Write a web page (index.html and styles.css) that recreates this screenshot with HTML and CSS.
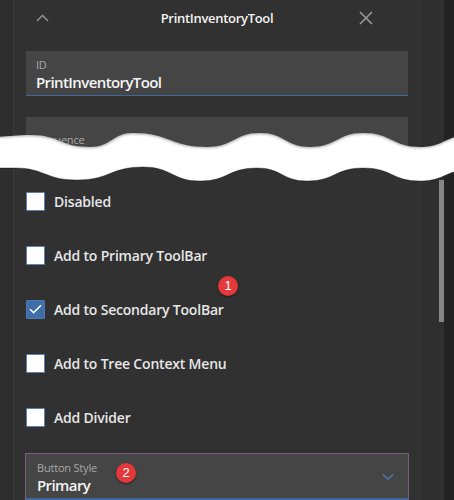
FILE: index.html
```html
<!DOCTYPE html>
<html lang="en">
<head>
<meta charset="utf-8">
<title>PrintInventoryTool</title>
<link rel="stylesheet" href="styles.css">
</head>
<body>
<div class="app">
  <div class="rail-left"></div>
  <div class="panel">
    <div class="header">
      <div class="hdr-left">
        <svg class="chev-up" width="13" height="8" viewBox="0 0 13 8"><path d="M1 7 L6.5 1.5 L12 7" fill="none" stroke="#8c8c8c" stroke-width="1.6"/></svg>
      </div>
      <div class="title">PrintInventoryTool</div>
      <div class="hdr-right">
        <svg width="14" height="14" viewBox="0 0 14 14"><path d="M1 1 L13 13 M13 1 L1 13" stroke="#9c9c9c" stroke-width="1.5"/></svg>
      </div>
    </div>

    <div class="field">
      <div class="label">ID</div>
      <div class="value">PrintInventoryTool</div>
    </div>

    <div class="field field-seq">
      <div class="label">Sequence</div>
      <div class="value">10</div>
    </div>

    <div class="checks">
      <div class="check"><span class="box"></span><span class="check-text">Disabled</span></div>
      <div class="check"><span class="box"></span><span class="check-text">Add to Primary ToolBar</span></div>
      <div class="check"><span class="box box-on"><svg width="13" height="10" viewBox="0 0 13 10"><path d="M1 5.2 L4.6 8.6 L12 1.2" fill="none" stroke="#ffffff" stroke-width="1.5"/></svg></span><span class="check-text">Add to Secondary ToolBar</span></div>
      <div class="check"><span class="box"></span><span class="check-text">Add to Tree Context Menu</span></div>
      <div class="check"><span class="box"></span><span class="check-text">Add Divider</span></div>
      <span class="badge badge-1">1</span>
    </div>

    <div class="select">
      <div class="select-body">
        <div class="label">Button Style</div>
        <div class="value">Primary</div>
      </div>
      <svg class="chev-down" width="12" height="8" viewBox="0 0 12 8"><path d="M1 1.5 L6 6 L11 1.5" fill="none" stroke="#4a7bb5" stroke-width="1.6"/></svg>
      <span class="badge badge-2">2</span>
    </div>
  </div>
  <div class="rail-right"><div class="thumb"></div></div>
  <div class="edge"></div>
</div>

<svg class="tear" width="454" height="70" viewBox="0 120 454 70">
  <defs>
    <filter id="soft" x="-5%" y="-50%" width="110%" height="200%">
      <feGaussianBlur stdDeviation="1.4"/>
    </filter>
    <clipPath id="band">
      <path d="M-10 137 C5 137 15 135 30 135 C60 135 60 147 90 147 C112 147 112 133 133 133 C170 133 170 147 207 147 C234 147 234 133 260 133 C285 133 285 147 310 147 C337 147 337 133 363 133 C392 133 392 147 420 147 C445 147 445 135 470 135 L470 170 C445 170 445 181 420 181 C392 181 392 168 363 168 C335 168 335 181 307 181 C282 181 282 168 257 168 C228 168 228 181 200 181 C172 181 172 167 143 167 C110 167 110 180 77 180 C45 180 45 168 15 168 L-10 168 Z"/>
    </clipPath>
  </defs>
  <path fill="#ffffff" d="M-10 137 C5 137 15 135 30 135 C60 135 60 147 90 147 C112 147 112 133 133 133 C170 133 170 147 207 147 C234 147 234 133 260 133 C285 133 285 147 310 147 C337 147 337 133 363 133 C392 133 392 147 420 147 C445 147 445 135 470 135 L470 170 C445 170 445 181 420 181 C392 181 392 168 363 168 C335 168 335 181 307 181 C282 181 282 168 257 168 C228 168 228 181 200 181 C172 181 172 167 143 167 C110 167 110 180 77 180 C45 180 45 168 15 168 L-10 168 Z"/>
  <g clip-path="url(#band)">
    <path filter="url(#soft)" fill="none" stroke="rgba(0,0,0,0.45)" stroke-width="3" d="M-10 136 C5 136 15 134 30 134 C60 134 60 146 90 146 C112 146 112 132 133 132 C170 132 170 146 207 146 C234 146 234 132 260 132 C285 132 285 146 310 146 C337 146 337 132 363 132 C392 132 392 146 420 146 C445 146 445 134 470 134"/>
  </g>
  <path fill="none" stroke="rgba(0,0,0,0.35)" stroke-width="1" d="M470 170 C445 170 445 181 420 181 C392 181 392 168 363 168 C335 168 335 181 307 181 C282 181 282 168 257 168 C228 168 228 181 200 181 C172 181 172 167 143 167 C110 167 110 180 77 180 C45 180 45 168 15 168 L-10 168"/>
</svg>
</body>
</html>
```

FILE: styles.css
```css
* { box-sizing: border-box; }

html, body {
  margin: 0;
  padding: 0;
  background: #2f2f2f;
  font-family: "Open Sans", "Noto Sans", sans-serif;
  color: #f0f0f0;
}

body {
  position: relative;
  width: 454px;
  height: 500px;
  overflow: hidden;
}

.app {
  display: flex;
  height: 500px;
}

.rail-left {
  width: 13px;
  background: #2e2e2e;
}

.panel {
  position: relative;
  width: 408px;
  padding: 0 12px;
  background: #313131;
  border-left: 1px solid #393939;
  border-right: 1px solid #393939;
  display: flex;
  flex-direction: column;
}

.rail-right {
  width: 23px;
  background: #2f2f2f;
  display: flex;
  justify-content: flex-end;
  padding-top: 180px;
}

.thumb {
  width: 5px;
  height: 142px;
  background: #878787;
}

.edge {
  width: 10px;
  background: #232323;
}

/* header */
.header {
  display: grid;
  grid-template-columns: 1fr auto 1fr;
  align-items: center;
  height: 36px;
}

.hdr-left {
  display: flex;
  padding-left: 10px;
}

.hdr-right {
  display: flex;
  justify-content: flex-end;
  padding-right: 35px;
}

.title {
  font-size: 13px;
  font-weight: 600;
  color: #f2f2f2;
  letter-spacing: -0.3px;
}

/* fields */
.field {
  margin-top: 15px;
  height: 46px;
  background: #454545;
  border-bottom: 1px solid #3c6aa0;
  padding: 6px 10px 0;
}

.field-seq {
  margin-top: 21px;
  padding-top: 15px;
}

.label {
  font-size: 11px;
  line-height: 15px;
  color: #a9a9a9;
  letter-spacing: -0.2px;
}

.value {
  font-size: 15px;
  line-height: 20px;
  font-weight: 600;
  color: #f4f4f4;
  letter-spacing: -0.6px;
}

/* checkboxes */
.checks {
  position: relative;
  margin-top: 28px;
  display: flex;
  flex-direction: column;
  gap: 34px;
}

.check {
  display: flex;
  align-items: center;
  gap: 9px;
  height: 20px;
}

.box {
  width: 19px;
  height: 19px;
  background: #ffffff;
  border: 1px solid #5c82b4;
  border-radius: 1px;
  display: flex;
  align-items: center;
  justify-content: center;
}

.box-on {
  background: #3f6ea8;
  border-color: #4a78b0;
}

.check-text {
  font-size: 14px;
  font-weight: 600;
  color: #e6e6e6;
  letter-spacing: -0.2px;
}

.badge {
  position: absolute;
  width: 20px;
  height: 20px;
  border-radius: 50%;
  background: #e4393b;
  color: #ffffff;
  font-family: "Liberation Sans", Arial, sans-serif;
  font-size: 13px;
  line-height: 20px;
  text-align: center;
  box-shadow: 0 1px 2px rgba(0,0,0,0.5);
}

.badge-1 {
  left: 192px;
  top: 85px;
}

/* select */
.select {
  position: relative;
  margin-top: 26px;
  height: 47px;
  margin-left: -1px;
  margin-right: -1px;
  background: #454545;
  border: 1px solid #7b5b80;
  border-bottom: 2px solid #3c6aa0;
  display: flex;
  align-items: center;
  padding: 0 14px 0 11px;
}

.select-body {
  flex: 1;
  padding-top: 3px;
}

.chev-down {
  margin-top: 2px;
}

.badge-2 {
  left: 90px;
  top: 9px;
}

.tear {
  position: absolute;
  left: 0;
  top: 120px;
}
```
